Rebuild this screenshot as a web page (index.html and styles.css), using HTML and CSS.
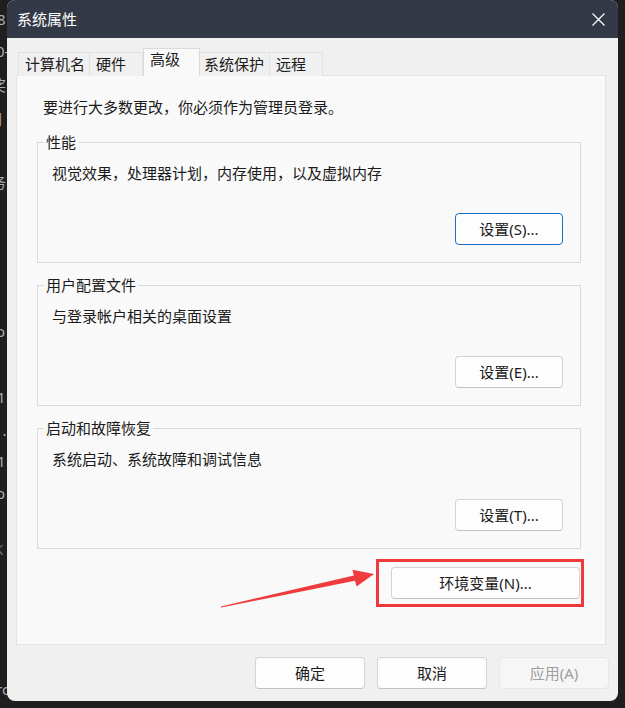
FILE: index.html
```html
<!DOCTYPE html>
<html lang="zh-CN">
<head>
<meta charset="utf-8">
<title>系统属性</title>
<link rel="stylesheet" href="styles.css">
</head>
<body>
<div class="desk">
  <span class="g g1">8</span>
  <span class="g g2">0-</span>
  <span class="g g3">奖</span>
  <span class="g g4">]</span>
  <span class="g g5">务</span>
  <span class="g g6">o</span>
  <span class="g g7">1</span>
  <span class="g g8">1.2</span>
  <span class="g g9">1</span>
  <span class="g g10">o</span>
  <span class="g g11">K</span>
  <span class="g g12">rc</span>
</div>
<div class="window">
  <div class="titlebar">
    <span class="title">系统属性</span>
    <svg class="close" width="13" height="13" viewBox="0 0 13 13"><path d="M0.5 0.5 L12.5 12.5 M12.5 0.5 L0.5 12.5" stroke="#ffffff" stroke-width="1.2" fill="none"/></svg>
  </div>
  <div class="tabs">
    <div class="tab tab-name">计算机名</div>
    <div class="tab tab-hw">硬件</div>
    <div class="tab tab-adv active">高级</div>
    <div class="tab tab-prot">系统保护</div>
    <div class="tab tab-remote">远程</div>
  </div>
  <div class="panel">
    <p class="note">要进行大多数更改，你必须作为管理员登录。</p>
    <fieldset class="group">
      <legend>性能</legend>
      <p class="desc">视觉效果，处理器计划，内存使用，以及虚拟内存</p>
      <div class="actions"><button class="btn btn-set default">设置(S)...</button></div>
    </fieldset>
    <fieldset class="group">
      <legend>用户配置文件</legend>
      <p class="desc">与登录帐户相关的桌面设置</p>
      <div class="actions"><button class="btn btn-set">设置(E)...</button></div>
    </fieldset>
    <fieldset class="group">
      <legend>启动和故障恢复</legend>
      <p class="desc">系统启动、系统故障和调试信息</p>
      <div class="actions"><button class="btn btn-set">设置(T)...</button></div>
    </fieldset>
    <div class="env-row"><button class="btn btn-env">环境变量(N)...</button></div>
  </div>
  <div class="footer">
    <button class="btn btn-foot">确定</button>
    <button class="btn btn-foot">取消</button>
    <button class="btn btn-foot disabled">应用(A)</button>
  </div>
</div>
<svg class="annot" width="625" height="708" viewBox="0 0 625 708">
  <rect x="377.5" y="560.5" width="205" height="45" fill="none" stroke="#ef3b3d" stroke-width="3"/>
  <polygon points="220.9,606.5 353.9,575.6 352.4,569.8 374,574 356.6,586.6 355.0,580.8 221.1,607.6" fill="#ef3b3d"/>
</svg>
</body>
</html>
```

FILE: styles.css
```css
html, body {
  margin: 0;
  padding: 0;
}
body {
  width: 625px;
  height: 708px;
  overflow: hidden;
  background: #1f1f1f;
  position: relative;
  font-family: "Noto Sans", "Noto Sans CJK SC", sans-serif;
  font-size: 15px;
  color: #1b1b1b;
}
.desk {
  position: absolute;
  left: 0;
  top: 0;
  width: 625px;
  height: 708px;
}
.g {
  position: absolute;
  color: #a9adb3;
  font-size: 15px;
  line-height: 18px;
  white-space: nowrap;
}
.g1 { left: -3px; top: 10px; }
.g2 { left: -4px; top: 42px; }
.g3 { left: -9px; top: 76px; }
.g4 { left: -3px; top: 108px; }
.g5 { left: -9px; top: 173px; }
.g6 { left: -4px; top: 322px; }
.g7 { left: -3px; top: 388px; }
.g8 { left: -6px; top: 421px; }
.g9 { left: -3px; top: 452px; }
.g10 { left: -4px; top: 484px; }
.g11 { left: -6px; top: 540px; color: #6d7480; }
.g12 { left: -4px; top: 680px; }

.window {
  position: relative;
  margin-left: 7px;
  width: 611px;
  height: 701px;
  background: #f0f0f0;
  border-radius: 8px;
  overflow: hidden;
}
.titlebar {
  height: 38px;
  background: #333946;
  display: flex;
  align-items: center;
  justify-content: space-between;
  padding: 0 13px 0 10px;
  box-sizing: border-box;
}
.title {
  color: #ffffff;
  font-size: 15px;
  line-height: 20px;
}
.close {
  display: block;
}
.tabs {
  display: flex;
  align-items: flex-end;
  height: 27px;
  margin: 11px 0 -1px 11px;
  position: relative;
  z-index: 1;
}
.tab {
  box-sizing: border-box;
  height: 24px;
  border: 1px solid #e2e2e2;
  border-bottom: none;
  background: #f0f0f0;
  padding: 1px 0 0 6px;
  line-height: 20px;
  white-space: nowrap;
}
.tab-name { width: 72px; }
.tab-hw { width: 53px; border-left: none; padding-left: 6px; }
.tab-adv { width: 57px; }
.tab-prot { width: 70px; border-left: none; padding-left: 4px; }
.tab-remote { width: 53px; border-left: none; }
.tab.active {
  height: 28px;
  background: #f9f9f9;
  border-color: #dadada;
  padding: 0 0 0 6px;
}
.panel {
  margin-left: 9px;
  width: 590px;
  height: 570px;
  box-sizing: border-box;
  background: #f9f9f9;
  border: 1px solid #e3e3e3;
  padding: 21px 24px 0 20px;
}
.note {
  margin: 0 0 15px 6px;
  line-height: 20px;
}
.group {
  margin: 12px 0 0 0;
  padding: 11px 17px 17px 6px;
  border: 1px solid #dadada;
  min-inline-size: 0;
}
.note + .group {
  margin-top: 0;
}
.group legend {
  padding: 0 2px;
  line-height: 20px;
}
.desc {
  margin: 0 0 30px 8px;
  line-height: 20px;
}
.actions {
  display: flex;
  justify-content: flex-end;
}
.btn {
  box-sizing: border-box;
  height: 32px;
  background: #fdfdfd;
  border: 1px solid #d3d3d3;
  border-bottom-color: #c2c2c2;
  border-radius: 4px;
  font-family: "Noto Sans", "Noto Sans CJK SC", sans-serif;
  font-size: 15px;
  color: #1b1b1b;
  padding: 0;
  line-height: 20px;
}
.btn-set {
  width: 108px;
}
.btn.default {
  border: 1px solid #1a6fc4;
}
.env-row {
  display: flex;
  justify-content: flex-end;
  margin-top: 18px;
  padding-right: 1px;
}
.btn-env {
  width: 189px;
}
.footer {
  display: flex;
  justify-content: flex-end;
  gap: 12px;
  margin-top: 12px;
  padding-right: 9px;
}
.btn-foot {
  width: 110px;
}
.btn.disabled {
  background: #f6f6f6;
  border: 1px solid #e6e6e6;
  color: #9e9e9e;
}
.annot {
  position: absolute;
  left: 0;
  top: 0;
  pointer-events: none;
}
```
